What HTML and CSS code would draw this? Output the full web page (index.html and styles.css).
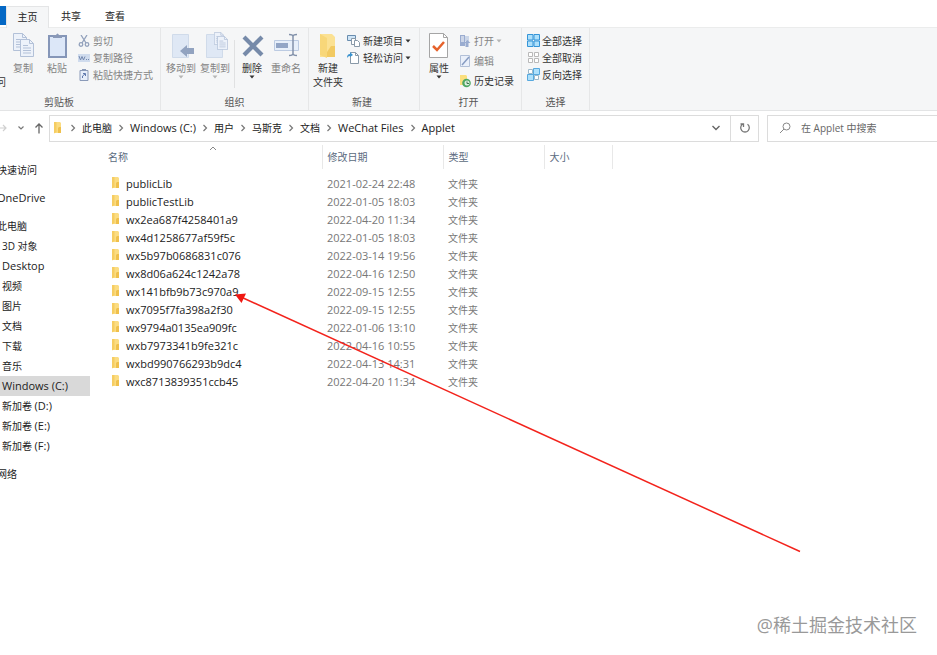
FILE: index.html
```html
<!DOCTYPE html>
<html lang="zh-CN">
<head>
    <meta charset="UTF-8">
    <meta name="viewport" content="width=device-width, initial-scale=1.0">
    <title>Applet</title>
    <link rel="stylesheet" href="styles.css">
</head>
<body>
    <svg class="defs" width="0" height="0">
        <symbol id="chevron" viewBox="0 0 18 10"><path d="M7.5 2 10.500 5 7.500 8" fill="none" stroke="#777" stroke-width="1.2"/></symbol>
        <symbol id="folder" viewBox="0 0 9 12"><path d="M1 0h6l1 1v10H1z" fill="#fbdc82"/><path d="M1 0h2.5v10L1 11.5z" fill="#f6cd62"/><path d="M6 5h2v6H5V6z" fill="#efc04c"/></symbol>
        <symbol id="caret" viewBox="0 0 6 4"><path d="M.5.5h5L3 3.5z" fill="currentColor"/></symbol>
        <symbol id="page" viewBox="0 0 14 18"><path d="M.5.5h9l4 4v13H.5z" fill="#edf2fa" stroke="#b3c1d8"/><path d="M9.5.5v4h4M3 6.500h5M3 9h8M3 11.500h8M3 14h8" fill="none" stroke="#b3c1d8"/></symbol>
    </svg>

    <nav class="tabs">
        <button class="tab file" aria-label="文件"></button>
        <button class="tab active">主页</button>
        <button class="tab">共享</button>
        <button class="tab">查看</button>
    </nav>

    <div class="ribbon">
        <section class="group clipboard">
            <div class="tools">
                <span class="clipped">问</span>
                <button class="big off">
                    <svg width="24" height="28" viewBox="0 0 24 28"><use href="#page" x="2" y="1" width="14" height="18"/><use href="#page" x="9" y="7" width="14" height="18"/></svg>
                    <span>复制</span>
                </button>
                <button class="big off">
                    <svg width="24" height="28" viewBox="0 0 24 28"><rect x="4" y="4" width="17" height="21" fill="#dce7f8" stroke="#8596b8" stroke-width="2"/><path d="M8 6V3h3q1.500-3 3 0h3v3z" fill="#8a99b8"/></svg>
                    <span>粘贴</span>
                </button>
                <div class="list off">
                    <button><svg width="12" height="12" viewBox="0 0 12 12" fill="none" stroke="#92a1bc" stroke-width="1.300"><path d="M3 0 8 8M9 0 4 8"/><circle cx="3" cy="9.500" r="1.800"/><circle cx="9" cy="9.500" r="1.800"/></svg>剪切</button>
                    <button><svg width="12" height="12" viewBox="0 0 12 12"><path d="M0 2h12v8H0z" fill="#cfdbed"/><path d="m1 4 1.500 4L4 4.500 5.500 8 7 4.500M8 7.500h1M10 7.500h1" fill="none" stroke="#7489b0"/></svg>复制路径</button>
                    <button><svg width="12" height="12" viewBox="0 0 12 12"><path d="M2 1.500h8v10H2z" fill="#e6eefa" stroke="#8a9ab8"/><path d="M4 0h4v2H4z" fill="#8a9ab8"/><path d="M4.500 9V7L7 5M5 4.500h2.500V7" fill="none" stroke="#5f79ad"/></svg>粘贴快捷方式</button>
                </div>
            </div>
            <h2>剪贴板</h2>
        </section>

        <section class="group organize">
            <div class="tools">
                <button class="big off">
                    <svg width="26" height="28" viewBox="0 0 26 28"><path d="M4.500 2.500h16v23h-16z" fill="#dfe8f5" stroke="#d0dbea"/><path d="m12 19 7-6v3h7v6h-7v3z" fill="#92a3c0"/></svg>
                    <span>移动到</span>
                    <svg class="caret" width="6" height="4"><use href="#caret"/></svg>
                </button>
                <button class="big off">
                    <svg width="26" height="28" viewBox="0 0 26 28"><path d="M4.500 2.500h16v23h-16z" fill="#dfe8f5" stroke="#d0dbea"/><use href="#page" x="12" y="0" width="10" height="13"/><use href="#page" x="15" y="4" width="11" height="14"/></svg>
                    <span>复制到</span>
                    <svg class="caret" width="6" height="4"><use href="#caret"/></svg>
                </button>
                <i class="divider"></i>
                <button class="big">
                    <svg width="26" height="28" viewBox="0 0 26 28"><path d="m5 5 18 18M23 5 5 23" stroke="#768aa9" stroke-width="4.200"/></svg>
                    <span>删除</span>
                    <svg class="caret" width="6" height="4"><use href="#caret"/></svg>
                </button>
                <button class="big off">
                    <svg width="26" height="28" viewBox="0 0 26 28"><path d="M1.500 8.500h24v10h-24z" fill="#e7effa" stroke="#bccbe2"/><path d="M3 11h12v5H3z" fill="#92a5c6"/><path d="M16 2.500q4 0 4 2 0-2 4-2M20 4v18M16 23.500q4 0 4-2 0 2 4 2" fill="none" stroke="#8291aa" stroke-width="1.500"/></svg>
                    <span>重命名</span>
                </button>
            </div>
            <h2>组织</h2>
        </section>

        <section class="group create">
            <div class="tools">
                <button class="big">
                    <svg width="24" height="28" viewBox="0 0 24 28"><path d="M4 2h12l3 3v20H4z" fill="#fbe193"/><path d="M4 2l7 4v20l-7-3z" fill="#f8d779"/><path d="M15 14h4v11h-8v-5z" fill="#f2ca62"/></svg>
                    <span>新建<br>文件夹</span>
                </button>
                <div class="list">
                    <button><svg width="13" height="12" viewBox="0 0 13 12"><path d="M.5.500h8v5h-8z" fill="#cfe5f7" stroke="#688cae"/><path d="M4.500 3.500h4v6h-4z" fill="#fff" stroke="#8999a8"/><path d="M7.500 5.500h3l2 2v4h-5z" fill="#fff" stroke="#8999a8"/></svg>新建项目<svg class="caret" width="6" height="4"><use href="#caret"/></svg></button>
                    <button><svg width="13" height="12" viewBox="0 0 13 12"><path d="M3.500.500h5l3 3v8h-8z" fill="#fff" stroke="#8999a8"/><path d="M8.500.500v3h3" fill="none" stroke="#8999a8"/><path d="M0 6q0-4 3-4V0l3 3-3 2V4Q1 4 0 6" fill="#3992ce"/></svg>轻松访问<svg class="caret" width="6" height="4"><use href="#caret"/></svg></button>
                </div>
            </div>
            <h2>新建</h2>
        </section>

        <section class="group open">
            <div class="tools">
                <button class="big">
                    <svg width="24" height="28" viewBox="0 0 24 28"><path d="M2.500 1.500h14l4 4v20h-18z" fill="#fff" stroke="#a5a5a5"/><path d="M16.500 1.500v4h4" fill="none" stroke="#a5a5a5"/><path d="m6 14 4 4 7-8" fill="none" stroke="#e6622b" stroke-width="2.500"/></svg>
                    <span>属性</span>
                    <svg class="caret" width="6" height="4"><use href="#caret"/></svg>
                </button>
                <div class="list">
                    <button class="off"><svg width="12" height="14" viewBox="0 0 12 14"><path d="M1 1h5v11H1z" fill="#9aacd0"/><path d="M2 3h3M2 5h3M2 7h3" stroke="#fff"/><path d="M6 2h4v5H6z" fill="#cbd6e8"/><path d="m8.500 6 3 3h-2v4h-3V9H5z" fill="#9aacd0"/></svg>打开<svg class="caret" width="6" height="4"><use href="#caret"/></svg></button>
                    <button class="off"><svg width="12" height="14" viewBox="0 0 12 14"><path d="M1.500 1.500h9v11h-9z" fill="#eaf0fa" stroke="#b2c0d8"/><path d="m3 11 7-8" stroke="#879cc2" stroke-width="1.500"/></svg>编辑</button>
                    <button><svg width="12" height="14" viewBox="0 0 12 14"><path d="M1 1h6l1 1v9H1z" fill="#fbdf7d"/><circle cx="7.500" cy="9" r="4.300" fill="#4fa763"/><circle cx="8" cy="9" r="2.500" fill="#dceee0"/><path d="M8 7.500v2h2" fill="none" stroke="#39744b"/></svg>历史记录</button>
                </div>
            </div>
            <h2>打开</h2>
        </section>

        <section class="group select">
            <div class="tools">
                <div class="list">
                    <button><svg width="13" height="13" viewBox="0 0 13 13"><path d="M.5.500h5.500v5.500H.5zM7 .5h5.500V6H7zM.5 7H6v5.500H.5zM7 7h5.500v5.500H7z" fill="#aee0fb" stroke="#3595d8"/></svg>全部选择</button>
                    <button><svg width="13" height="13" viewBox="0 0 13 13"><path d="M1.500 1.500h4v4h-4zM7.500 1.500h4v4h-4zM1.500 7.500h4v4h-4zM7.500 7.500h4v4h-4z" fill="#fff" stroke="#b9b9b9"/></svg>全部取消</button>
                    <button><svg width="13" height="13" viewBox="0 0 13 13"><path d="M1.500 1.500h4v4h-4zM7.500 7.500h4v4h-4z" fill="#fff" stroke="#9bb8ca"/><path d="M6.500.500h6v6h-6zM.5 6.500h6v6h-6z" fill="#aee0fb" stroke="#58a9de"/></svg>反向选择</button>
                </div>
            </div>
            <h2>选择</h2>
        </section>
    </div>

    <div class="location">
        <button class="forward" aria-label="前进"><svg width="9" height="10" viewBox="0 0 9 10"><path d="M0 5h6M3 2l3 3-3 3" fill="none" stroke="#d0d0d0" stroke-width="1.200"/></svg></button>
        <button class="recent" aria-label="最近浏览的位置"><svg width="8" height="6" viewBox="0 0 8 6"><path d="m1.500 1.500 2.500 2.500 2.500-2.500" fill="none" stroke="#777" stroke-width="1.200"/></svg></button>
        <button class="up" aria-label="上移"><svg width="10" height="12" viewBox="0 0 10 12"><path d="M5 11.500V2M1.500 5.500 5 2l3.500 3.500" fill="none" stroke="#666" stroke-width="1.300"/></svg></button>
        <div class="address">
            <svg width="9" height="12"><use href="#folder"/></svg>
            <ol class="crumbs">
                <li><svg width="18" height="10"><use href="#chevron"/></svg><a href="#" class="zh">此电脑</a></li>
                <li><svg width="18" height="10"><use href="#chevron"/></svg><a href="#">Windows (C:)</a></li>
                <li><svg width="18" height="10"><use href="#chevron"/></svg><a href="#" class="zh">用户</a></li>
                <li><svg width="18" height="10"><use href="#chevron"/></svg><a href="#" class="zh">马斯克</a></li>
                <li><svg width="18" height="10"><use href="#chevron"/></svg><a href="#" class="zh">文档</a></li>
                <li><svg width="18" height="10"><use href="#chevron"/></svg><a href="#">WeChat Files</a></li>
                <li><svg width="18" height="10"><use href="#chevron"/></svg><a href="#">Applet</a></li>
            </ol>
            <button class="history" aria-label="以前的位置"><svg width="10" height="8" viewBox="0 0 10 8"><path d="m1.500 2 3.500 3.500L8.500 2" fill="none" stroke="#666" stroke-width="1.400"/></svg></button>
            <button class="refresh" aria-label="刷新"><svg width="12" height="12" viewBox="0 0 12 12"><path d="M8.500 2.200a4.300 4.300 0 1 1-5 0M1.500 2h3v3" fill="none" stroke="#777" stroke-width="1.300"/></svg></button>
        </div>
        <label class="search">
            <svg width="12" height="12" viewBox="0 0 12 12"><circle cx="7.500" cy="4.500" r="3.500" fill="none" stroke="#888"/><path d="M5 7 1 11" stroke="#888"/></svg>
            <input type="search" aria-label="搜索" placeholder="在 Applet 中搜索">
        </label>
    </div>

    <main class="content">
        <nav class="tree">
            <a href="#" class="root">快速访问</a>
            <a href="#" class="root en">OneDrive</a>
            <a href="#" class="root">此电脑</a>
            <a href="#">3D 对象</a>
            <a href="#" class="en">Desktop</a>
            <a href="#">视频</a>
            <a href="#">图片</a>
            <a href="#">文档</a>
            <a href="#">下载</a>
            <a href="#">音乐</a>
            <a href="#" class="en selected">Windows (C:)</a>
            <a href="#">新加卷 <span class="en">(D:)</span></a>
            <a href="#">新加卷 <span class="en">(E:)</span></a>
            <a href="#">新加卷 <span class="en">(F:)</span></a>
            <a href="#" class="root">网络</a>
        </nav>

        <table class="files">
            <thead>
                <tr>
                    <th class="name">名称<svg class="sort" width="8" height="5" viewBox="0 0 8 5"><path d="m1 4 3-3 3 3" fill="none" stroke="#888"/></svg></th>
                    <th class="date">修改日期</th>
                    <th class="type">类型</th>
                    <th class="size">大小</th>
                </tr>
            </thead>
            <tbody>
                <tr><td><svg width="9" height="12"><use href="#folder"/></svg>publicLib</td><td>2021-02-24 22:48</td><td>文件夹</td><td></td></tr>
                <tr><td><svg width="9" height="12"><use href="#folder"/></svg>publicTestLib</td><td>2022-01-05 18:03</td><td>文件夹</td><td></td></tr>
                <tr><td><svg width="9" height="12"><use href="#folder"/></svg>wx2ea687f4258401a9</td><td>2022-04-20 11:34</td><td>文件夹</td><td></td></tr>
                <tr><td><svg width="9" height="12"><use href="#folder"/></svg>wx4d1258677af59f5c</td><td>2022-01-05 18:03</td><td>文件夹</td><td></td></tr>
                <tr><td><svg width="9" height="12"><use href="#folder"/></svg>wx5b97b0686831c076</td><td>2022-03-14 19:56</td><td>文件夹</td><td></td></tr>
                <tr><td><svg width="9" height="12"><use href="#folder"/></svg>wx8d06a624c1242a78</td><td>2022-04-16 12:50</td><td>文件夹</td><td></td></tr>
                <tr><td><svg width="9" height="12"><use href="#folder"/></svg>wx141bfb9b73c970a9</td><td>2022-09-15 12:55</td><td>文件夹</td><td></td></tr>
                <tr><td><svg width="9" height="12"><use href="#folder"/></svg>wx7095f7fa398a2f30</td><td>2022-09-15 12:55</td><td>文件夹</td><td></td></tr>
                <tr><td><svg width="9" height="12"><use href="#folder"/></svg>wx9794a0135ea909fc</td><td>2022-01-06 13:10</td><td>文件夹</td><td></td></tr>
                <tr><td><svg width="9" height="12"><use href="#folder"/></svg>wxb7973341b9fe321c</td><td>2022-04-16 10:55</td><td>文件夹</td><td></td></tr>
                <tr><td><svg width="9" height="12"><use href="#folder"/></svg>wxbd990766293b9dc4</td><td>2022-04-13 14:31</td><td>文件夹</td><td></td></tr>
                <tr><td><svg width="9" height="12"><use href="#folder"/></svg>wxc8713839351ccb45</td><td>2022-04-20 11:34</td><td>文件夹</td><td></td></tr>
            </tbody>
        </table>
    </main>

    <!-- 标注箭头 -->
    <svg class="arrow" width="810" height="560" viewBox="0 0 810 560"><path d="M241 297 800 551.500" stroke="#f3231c" stroke-width="1.500"/><path d="m235 294.500 11-1-4.500 9.500z" fill="#f01812"/></svg>
    <div class="watermark">@稀土掘金技术社区</div>
</body>
</html>
```
FILE: styles.css
```css
* {
    box-sizing: border-box;
}
body {
    margin: 0;
    min-height: 100vh;
    position: relative;
    overflow-x: hidden;
    background: #fff;
    color: #222;
    font-family: "Open Sans", "Noto Sans CJK SC", sans-serif;
    font-size: 11px;
    line-height: 16px;
}
button {
    padding: 0;
    border: 0;
    background: none;
    color: inherit;
    font: inherit;
}
a {
    color: inherit;
    text-decoration: none;
}
svg {
    flex: none;
}
.defs {
    position: absolute;
}

/* 选项卡 */
.tabs {
    display: flex;
    height: 28px;
    padding-top: 6px;
    font-size: 10px;
}
.tab {
    width: 44px;
    height: 20px;
}
.tab.file {
    width: 6px;
    height: 19px;
    background: #0468c5;
}
.tab.active {
    position: relative;
    height: 22px;
    width: 43px;
    padding-bottom: 2px;
    background: #f5f6f7;
    border: 1px solid #e4e5e6;
    border-bottom: 0;
}

/* 功能区 */
.ribbon {
    display: flex;
    margin-top: -1px;
    background: #f5f6f7;
    border-top: 1px solid #ebecec;
    border-bottom: 1px solid #e3e4e5;
    color: #333;
    font-size: 10px;
}
.group {
    display: flex;
    flex-direction: column;
    border-right: 1px solid #e6e7e8;
}
.group h2 {
    margin: 0;
    padding-top: 1px;
    color: #555;
    font-size: 10px;
    font-weight: normal;
    line-height: 16px;
    text-align: center;
}
.tools {
    display: flex;
    align-items: flex-start;
    height: 65px;
    padding-top: 4px;
}
.clipboard { width: 161px; }
.clipboard h2 { padding-right: 42px; }
.organize { width: 148px; }
.create { width: 111px; }
.create h2 { padding-right: 4px; }
.open { width: 102px; }
.open h2 { padding-right: 4px; }
.select { width: 68px; }

.big {
    display: flex;
    flex-direction: column;
    align-items: center;
    width: 34px;
    line-height: 14px;
    white-space: nowrap;
}
.big span {
    padding-top: 1px;
}
.clipped {
    width: 6px;
    padding-top: 42px;
    direction: rtl;
}
.off {
    color: #848484;
}
.off .caret {
    color: #b5b5b5;
}
.list {
    display: flex;
    flex-direction: column;
    align-items: flex-start;
    padding-left: 4px;
}
.list button {
    display: flex;
    align-items: center;
    gap: 3px;
    height: 17px;
    white-space: nowrap;
}
.list .caret {
    margin-left: -1px;
}
.organize .tools {
    padding-left: 3px;
}
.organize .divider {
    width: 1px;
    height: 48px;
    margin: 8px 0 0 2px;
    background: #e0e1e2;
}
.create .tools,
.open .tools {
    padding-left: 2px;
}
.create .list {
    padding-left: 2px;
}
.open .list {
    padding-left: 3px;
    margin-top: -1px;
}
.open .list button {
    height: 20px;
}
.select .list {
    padding-left: 5px;
}
.select .list button {
    gap: 2px;
}

/* 地址栏 */
.location {
    display: flex;
    align-items: center;
    height: 34px;
}
.forward {
    width: 14px;
}
.recent {
    width: 14px;
}
.up {
    width: 21px;
}
.location button {
    display: flex;
    align-items: center;
    justify-content: center;
}
.location .forward {
    justify-content: flex-start;
}
.address {
    display: flex;
    flex: 1;
    align-items: center;
    height: 27px;
    padding-left: 3px;
    border: 1px solid #dcdcdc;
}
.crumbs {
    display: flex;
    flex: 1;
    margin: 0;
    padding-left: 2px;
    list-style: none;
}
.crumbs li {
    display: flex;
    align-items: center;
}
.zh {
    font-size: 10px;
}
.history {
    width: 28px;
}
.refresh {
    width: 28px;
    height: 25px;
    border-left: 1px solid #dcdcdc;
}
.search {
    display: flex;
    align-items: center;
    gap: 10px;
    width: 170px;
    height: 27px;
    margin-left: 8px;
    padding-left: 11px;
    border: 1px solid #dcdcdc;
    border-right: 0;
}
.search input {
    flex: 1;
    min-width: 0;
    padding: 0;
    border: 0;
    outline: 0;
    background: none;
    font: inherit;
    font-size: 10px;
}
.search input::placeholder {
    color: #666;
}

/* 导航窗格和文件列表 */
.content {
    display: flex;
    align-items: flex-start;
}
.tree {
    display: flex;
    flex-direction: column;
    width: 90px;
    padding-top: 15px;
    font-size: 10px;
    line-height: 20px;
    overflow: hidden;
    white-space: nowrap;
}
.tree a {
    height: 20px;
    padding-left: 2px;
}
.tree .root {
    margin-left: -5px;
}
.tree .root + .root {
    margin-top: 8px;
}
.tree a:not(.root) + .root {
    margin-top: 8px;
}
.tree .en {
    font-size: 11px;
}
.tree .selected {
    background: #d9d9d9;
}
.files {
    width: 523px;
    border-collapse: collapse;
    table-layout: fixed;
}
.files th {
    position: relative;
    height: 24px;
    padding: 0 0 0 5px;
    border-right: 1px solid #e8e8e8;
    color: #5b6b80;
    font-size: 10px;
    font-weight: normal;
    text-align: left;
}
.files th.name {
    width: 232px;
    padding-left: 18px;
}
.files th.date { width: 121px; }
.files th.type { width: 101px; }
.sort {
    position: absolute;
    top: 1px;
    left: 119px;
}
.files tbody::before {
    content: "";
    display: block;
    height: 6px;
}
.files td {
    height: 18px;
    padding: 0 0 0 5px;
    color: #777;
    white-space: nowrap;
}
.files td:first-child {
    padding-left: 21px;
    color: #222;
}
.files td:first-child svg {
    margin-right: 6px;
    vertical-align: -1px;
}
.files td:nth-child(3) {
    font-size: 10px;
}

.arrow {
    position: absolute;
    top: 0;
    left: 0;
    pointer-events: none;
}
.watermark {
    position: absolute;
    right: 20px;
    bottom: 18px;
    color: #999;
    font-size: 18px;
    line-height: 24px;
}
```
